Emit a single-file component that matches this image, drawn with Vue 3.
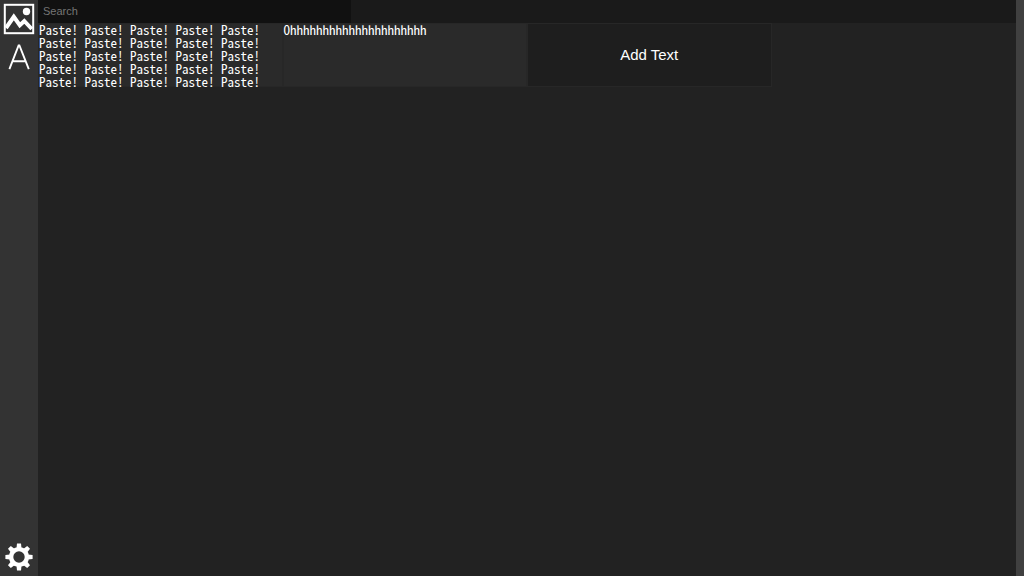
<script setup>
import { ref, computed } from 'vue'

const query = ref('')
const snippets = [
  Array(25).fill('Paste!').join(' '),
  'O' + 'h'.repeat(21),
]
const shown = computed(() =>
  snippets.filter((s) => s.toLowerCase().includes(query.value.toLowerCase()))
)
</script>

<template>
  <div class="app">
    <nav class="sidebar">
      <button class="tool" type="button" aria-label="Images">
        <svg viewBox="0 0 32 32" width="32" height="32">
          <rect x="1.8" y="1.8" width="28.4" height="28.4" fill="none" stroke="#fff" stroke-width="2" />
          <circle cx="23.5" cy="8.5" r="3.7" fill="#fff" />
          <path d="M3 25 L10.8 13.8 L16.8 22.2 L21.3 18 L28.8 26" fill="none" stroke="#fff" stroke-width="4" />
        </svg>
      </button>
      <button class="tool" type="button" aria-label="Text">
        <svg viewBox="0 0 32 32" width="32" height="32">
          <path d="M6.4 28.2 L15.6 4.4 H16.4 L25.8 28.2 M9.6 20.3 H22.5" fill="none" stroke="#fff" stroke-width="1.9" />
        </svg>
      </button>
      <button class="tool settings" type="button" aria-label="Settings">
        <svg viewBox="-16 -16 32 32" width="32" height="32">
          <circle r="7.9" fill="none" stroke="#fff" stroke-width="4.4" />
          <g fill="#fff">
            <path v-for="n in 8" :key="n" d="M-2.5 -9 L-2 -13.6 H2 L2.5 -9 Z" :transform="`rotate(${n * 45})`" />
          </g>
        </svg>
      </button>
    </nav>
    <div class="content">
      <header class="topbar">
        <input v-model="query" class="search" type="text" placeholder="Search" aria-label="Search" />
      </header>
      <main class="grid">
        <button v-for="text in shown" :key="text" class="card snippet" type="button">
          {{ text }}
        </button>
        <button class="card add" type="button">Add Text</button>
      </main>
    </div>
    <div class="track"></div>
  </div>
</template>

<style>
body {
  margin: 0;
  background: #222;
}
</style>

<style scoped>
.app {
  display: flex;
  min-height: 100vh;
  background: #222;
  color: #fff;
  font-family: "Liberation Sans", Arial, sans-serif;
}
.sidebar {
  display: flex;
  flex-direction: column;
  gap: 6px;
  flex: none;
  padding: 3px;
  background: #333;
}
.tool {
  padding: 0;
  border: 0;
  background: none;
  line-height: 0;
}
.settings {
  margin-top: auto;
}
.content {
  flex: 1;
  min-width: 0;
}
.topbar {
  display: flex;
  background: #1a1a1a;
}
.search {
  width: 32%;
  height: 23px;
  box-sizing: border-box;
  padding: 0 5px 1px;
  border: 0;
  outline: 0;
  background: #111;
  color: #fff;
  font: 11px "Liberation Sans", Arial, sans-serif;
}
.search::placeholder {
  color: #757575;
}
.grid {
  display: grid;
  grid-template-columns: repeat(4, 1fr);
  grid-auto-rows: 64px;
}
.card {
  min-width: 0;
  padding: 0 1px;
  border: 0;
  border-radius: 0;
  box-shadow: inset 0 0 0 1px #272727;
  color: #fff;
}
.snippet {
  display: flex;
  align-items: flex-start;
  background: #2a2a2a;
  text-align: left;
  font: 13px/13px "Noto Sans Mono CJK JP", "Noto Sans CJK JP", monospace;
}
.add {
  padding-bottom: 2px;
  background: #1e1e1e;
  font: 15px "Liberation Sans", Arial, sans-serif;
}
.track {
  flex: none;
  width: 8px;
  background: #404040;
}
</style>
